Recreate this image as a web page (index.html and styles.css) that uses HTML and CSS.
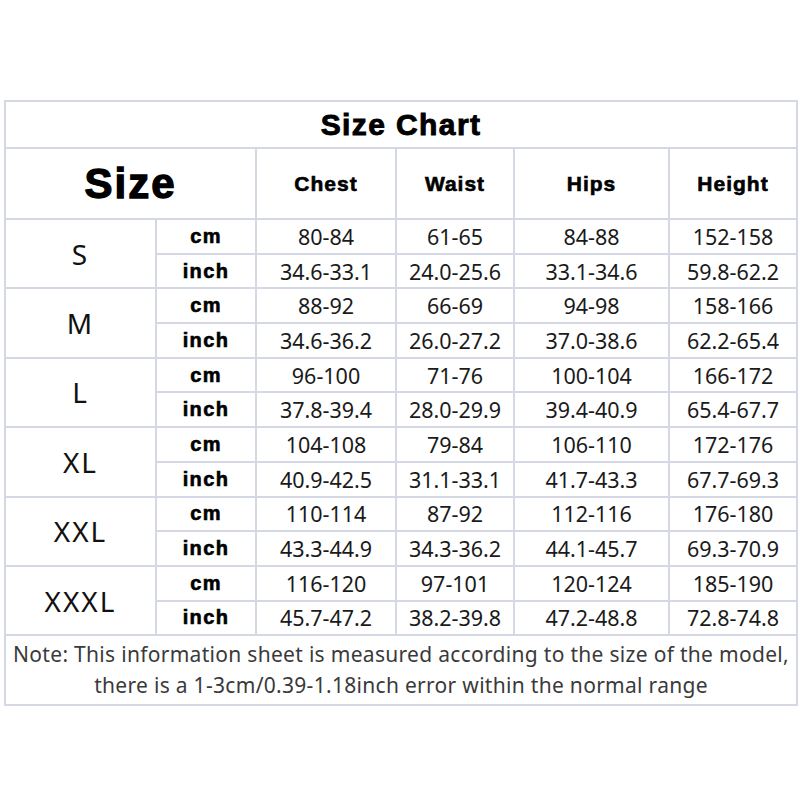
FILE: index.html
```html
<!DOCTYPE html>
<html>
<head>
<meta charset="utf-8">
<link rel="stylesheet" href="styles.css">
</head>
<body>
<div class="page">
<table class="chart">
  <colgroup>
    <col class="c-size"><col class="c-unit"><col class="c-chest"><col class="c-waist"><col class="c-hips"><col class="c-height">
  </colgroup>
  <tr class="r-title"><td colspan="6" class="title">Size Chart</td></tr>
  <tr class="r-head">
    <td colspan="2" class="big">Size</td>
    <td class="head">Chest</td><td class="head">Waist</td><td class="head">Hips</td><td class="head">Height</td>
  </tr>
  <tr class="r-data"><td rowspan="2" class="size">S</td><td class="unit">cm</td><td>80-84</td><td>61-65</td><td>84-88</td><td>152-158</td></tr>
  <tr class="r-data"><td class="unit">inch</td><td>34.6-33.1</td><td>24.0-25.6</td><td>33.1-34.6</td><td>59.8-62.2</td></tr>
  <tr class="r-data"><td rowspan="2" class="size">M</td><td class="unit">cm</td><td>88-92</td><td>66-69</td><td>94-98</td><td>158-166</td></tr>
  <tr class="r-data"><td class="unit">inch</td><td>34.6-36.2</td><td>26.0-27.2</td><td>37.0-38.6</td><td>62.2-65.4</td></tr>
  <tr class="r-data"><td rowspan="2" class="size">L</td><td class="unit">cm</td><td>96-100</td><td>71-76</td><td>100-104</td><td>166-172</td></tr>
  <tr class="r-data"><td class="unit">inch</td><td>37.8-39.4</td><td>28.0-29.9</td><td>39.4-40.9</td><td>65.4-67.7</td></tr>
  <tr class="r-data"><td rowspan="2" class="size">XL</td><td class="unit">cm</td><td>104-108</td><td>79-84</td><td>106-110</td><td>172-176</td></tr>
  <tr class="r-data"><td class="unit">inch</td><td>40.9-42.5</td><td>31.1-33.1</td><td>41.7-43.3</td><td>67.7-69.3</td></tr>
  <tr class="r-data"><td rowspan="2" class="size">XXL</td><td class="unit">cm</td><td>110-114</td><td>87-92</td><td>112-116</td><td>176-180</td></tr>
  <tr class="r-data"><td class="unit">inch</td><td>43.3-44.9</td><td>34.3-36.2</td><td>44.1-45.7</td><td>69.3-70.9</td></tr>
  <tr class="r-data"><td rowspan="2" class="size">XXXL</td><td class="unit">cm</td><td>116-120</td><td>97-101</td><td>120-124</td><td>185-190</td></tr>
  <tr class="r-data"><td class="unit">inch</td><td>45.7-47.2</td><td>38.2-39.8</td><td>47.2-48.8</td><td>72.8-74.8</td></tr>
  <tr class="r-note"><td colspan="6" class="note">Note: This information sheet is measured according to the size of the model,<br>there is a 1-3cm/0.39-1.18inch error within the normal range</td></tr>
</table>
</div>
</body>
</html>
```

FILE: styles.css
```css
html, body {
  margin: 0;
  padding: 0;
  background: #ffffff;
}
.page {
  padding: 100px 0 0 4px;
}
.chart {
  border-collapse: collapse;
  table-layout: fixed;
  width: 792px;
  font-family: "Noto Sans", "Open Sans", sans-serif;
  color: #1a1a1a;
}
.chart td {
  border: 2px solid #d4d7e4;
  text-align: center;
  vertical-align: middle;
  padding: 0;
  font-size: 21.5px;
  white-space: nowrap;
  overflow: hidden;
}
.c-size { width: 151px; }
.c-unit { width: 100px; }
.c-chest { width: 140px; }
.c-waist { width: 118px; }
.c-hips { width: 155px; }
.c-height { width: 128px; }
.r-title { height: 47px; }
.r-head { height: 71px; }
.r-data { height: 34.7px; }
.r-note { height: 70px; }
.chart td.title {
  font-family: "Liberation Sans", Arial, sans-serif;
  font-weight: 700;
  font-size: 30px;
  letter-spacing: 1.4px;
  color: #000;
  -webkit-text-stroke: 0.9px #000;
}
.chart td.big {
  font-family: "Liberation Sans", Arial, sans-serif;
  font-weight: 700;
  font-size: 42px;
  letter-spacing: 2px;
  color: #000;
  -webkit-text-stroke: 1.3px #000;
}
.chart td.head {
  font-family: "Liberation Sans", Arial, sans-serif;
  font-weight: 700;
  font-size: 21px;
  letter-spacing: 1px;
  color: #000;
  -webkit-text-stroke: 0.6px #000;
}
.chart td.unit {
  font-family: "Liberation Sans", Arial, sans-serif;
  font-weight: 700;
  font-size: 20px;
  letter-spacing: 1.4px;
  color: #000;
  -webkit-text-stroke: 0.6px #000;
}
.chart td.size {
  font-size: 28px;
  letter-spacing: 2px;
  color: #111;
}
.chart td.note {
  font-size: 21px;
  line-height: 31px;
  color: #3a3a3a;
  letter-spacing: 0.3px;
}
```
